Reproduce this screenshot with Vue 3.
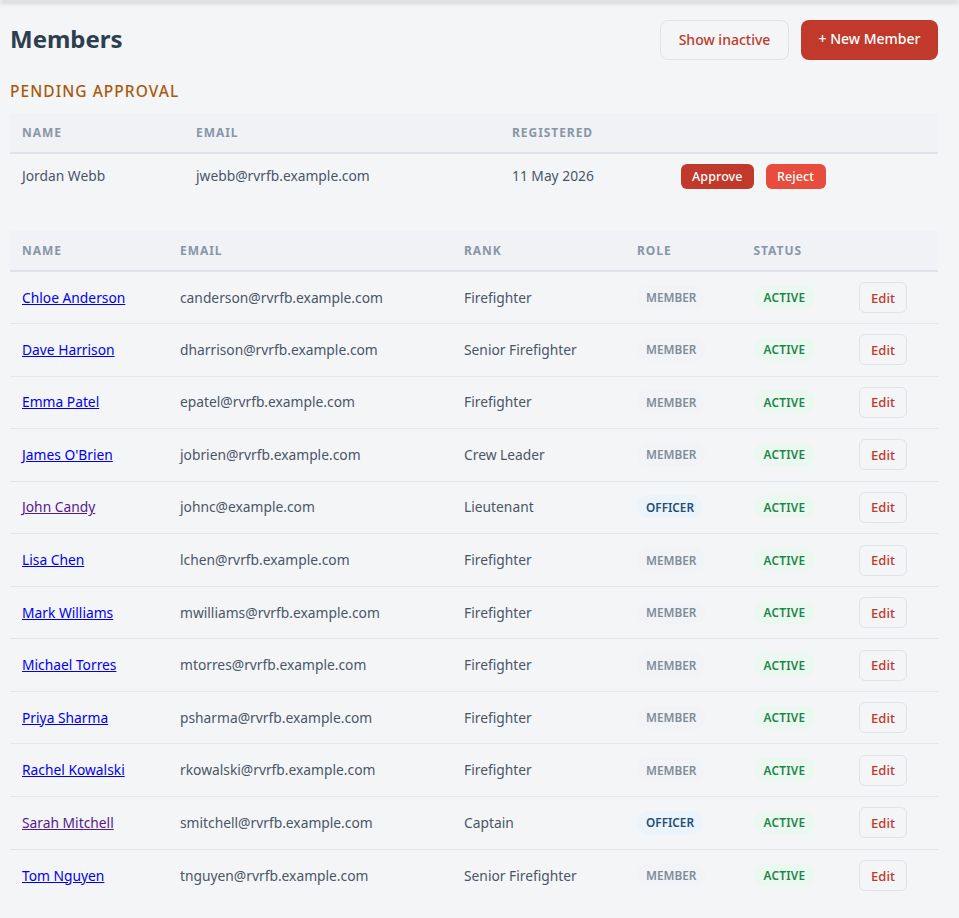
<template>
  <div class="page">
    <div class="top-shadow" />
    <main class="content">
      <!-- HEADER -->
      <div class="page-header">
        <h1>Members</h1>
        <div class="header-actions">
          <button class="btn-outline">Show inactive</button>
          <button class="btn-primary">+ New Member</button>
        </div>
      </div>

      <!-- PENDING -->
      <h2 class="pending-title">PENDING APPROVAL</h2>
      <table class="data-table pending-table">
        <colgroup>
          <col style="width: 174px" />
          <col style="width: 316px" />
          <col style="width: 169px" />
          <col />
        </colgroup>
        <thead>
          <tr>
            <th>NAME</th>
            <th>EMAIL</th>
            <th>REGISTERED</th>
            <th></th>
          </tr>
        </thead>
        <tbody>
          <tr>
            <td>Jordan Webb</td>
            <td>jwebb@rvrfb.example.com</td>
            <td>11 May 2026</td>
            <td>
              <div class="pending-actions">
                <button class="btn-small approve">Approve</button>
                <button class="btn-small reject">Reject</button>
              </div>
            </td>
          </tr>
        </tbody>
      </table>

      <!-- MEMBERS -->
      <table class="data-table members-table">
        <colgroup>
          <col style="width: 158px" />
          <col style="width: 284px" />
          <col style="width: 173px" />
          <col style="width: 116.5px" />
          <col style="width: 105.5px" />
          <col />
        </colgroup>
        <thead>
          <tr>
            <th>NAME</th>
            <th>EMAIL</th>
            <th>RANK</th>
            <th>ROLE</th>
            <th>STATUS</th>
            <th></th>
          </tr>
        </thead>
        <tbody>
          <tr v-for="m in members" :key="m.email">
            <td><a href="#" :class="{ visited: m.role === 'OFFICER' }" @click.prevent>{{ m.name }}</a></td>
            <td>{{ m.email }}</td>
            <td>{{ m.rank }}</td>
            <td><span class="badge" :class="m.role === 'OFFICER' ? 'badge-officer' : 'badge-member'">{{ m.role }}</span></td>
            <td><span class="badge badge-active">ACTIVE</span></td>
            <td class="edit-cell"><button class="btn-edit">Edit</button></td>
          </tr>
        </tbody>
      </table>
    </main>
  </div>
</template>

<script setup>
const members = [
  { name: 'Chloe Anderson', email: 'canderson@rvrfb.example.com', rank: 'Firefighter', role: 'MEMBER' },
  { name: 'Dave Harrison', email: 'dharrison@rvrfb.example.com', rank: 'Senior Firefighter', role: 'MEMBER' },
  { name: 'Emma Patel', email: 'epatel@rvrfb.example.com', rank: 'Firefighter', role: 'MEMBER' },
  { name: "James O'Brien", email: 'jobrien@rvrfb.example.com', rank: 'Crew Leader', role: 'MEMBER' },
  { name: 'John Candy', email: 'johnc@example.com', rank: 'Lieutenant', role: 'OFFICER' },
  { name: 'Lisa Chen', email: 'lchen@rvrfb.example.com', rank: 'Firefighter', role: 'MEMBER' },
  { name: 'Mark Williams', email: 'mwilliams@rvrfb.example.com', rank: 'Firefighter', role: 'MEMBER' },
  { name: 'Michael Torres', email: 'mtorres@rvrfb.example.com', rank: 'Firefighter', role: 'MEMBER' },
  { name: 'Priya Sharma', email: 'psharma@rvrfb.example.com', rank: 'Firefighter', role: 'MEMBER' },
  { name: 'Rachel Kowalski', email: 'rkowalski@rvrfb.example.com', rank: 'Firefighter', role: 'MEMBER' },
  { name: 'Sarah Mitchell', email: 'smitchell@rvrfb.example.com', rank: 'Captain', role: 'OFFICER' },
  { name: 'Tom Nguyen', email: 'tnguyen@rvrfb.example.com', rank: 'Senior Firefighter', role: 'MEMBER' }
]
</script>

<style>
html, body { margin: 0; background: #f4f5f7; }
</style>

<style scoped>
.page {
  min-height: 918px;
  background: #f4f5f7;
  font-family: 'Noto Sans', 'Open Sans', sans-serif;
  color: #4a5568;
  overflow: hidden;
}
.top-shadow {
  height: 1px;
  margin-top: -1px;
  box-shadow: 0 2px 5px rgba(0, 0, 0, 0.55);
}
.content { padding: 20px 21px 0 10px; }

.page-header {
  display: flex;
  justify-content: space-between;
  align-items: center;
  height: 40px;
}
h1 {
  margin: -3px 0 0;
  font-size: 24px;
  font-weight: 700;
  color: #2c3e50;
}
.header-actions { display: flex; gap: 12px; }

button { font-family: inherit; cursor: pointer; }
.btn-outline {
  width: 129px;
  height: 40px;
  border: 1px solid #dfe3ec;
  border-radius: 8px;
  background: transparent;
  color: #c0392b;
  font-size: 14px;
  font-weight: 500;
  padding-bottom: 2px;
}
.btn-primary {
  width: 137px;
  height: 40px;
  border: none;
  border-radius: 8px;
  background: #c0392b;
  color: #fff;
  font-size: 14px;
  font-weight: 500;
  padding-bottom: 4px;
}

.pending-title {
  margin: 21px 0 12px;
  font-size: 15.5px;
  line-height: 20px;
  font-weight: 500;
  letter-spacing: 1.05px;
  color: #a85a0c;
}

.data-table {
  width: 928px;
  table-layout: fixed;
  border-collapse: collapse;
  font-size: 13.8px;
}
th {
  height: 39px;
  padding: 0 12px;
  text-align: left;
  background: #f0f2f6;
  border-bottom: 2px solid #dfe2ea;
  color: #8896a8;
  font-size: 12px;
  font-weight: 700;
  letter-spacing: 0.95px;
}
td {
  padding: 0 12px;
  white-space: nowrap;
}
.pending-table td { height: 42px; padding-bottom: 5px; }
.members-table { margin-top: 30px; }
.members-table td {
  height: 52.56px;
  padding-top: 0;
  padding-bottom: 1px;
  border-bottom: 1px solid #e2e5ec;
  box-sizing: border-box;
}
.members-table td.edit-cell { padding-bottom: 0; }
.members-table tr:last-child td { border-bottom: none; }

a { color: #0000ee; text-decoration: underline; }
a.visited { color: #551a8b; }

.pending-actions { display: flex; gap: 12px; margin-top: 3px; }
.btn-small {
  height: 25px;
  padding: 0 11px;
  border: none;
  border-radius: 6px;
  color: #fff;
  font-size: 12.5px;
  font-weight: 500;
  letter-spacing: 0.1px;
}
.approve { background: #c0392b; }
.reject { background: #e74c3c; width: 60px; }

.badge {
  display: inline-block;
  padding: 2.5px 9px;
  border-radius: 12px;
  font-size: 11.8px;
  line-height: 18px;
  font-weight: 600;
}
.badge-member { background: #f1f3f6; color: #7f8c9a; }
.badge-officer { background: #ebf4fb; color: #1f4e79; }
.badge-active { background: #eaf8f0; color: #1e8449; letter-spacing: 0.25px; padding: 2.5px 10px; }

.btn-edit {
  width: 48px;
  height: 31px;
  display: block;
  border: 1px solid #dfe3ec;
  border-radius: 6px;
  background: transparent;
  color: #c0392b;
  font-size: 13px;
  font-weight: 500;
}
</style>
